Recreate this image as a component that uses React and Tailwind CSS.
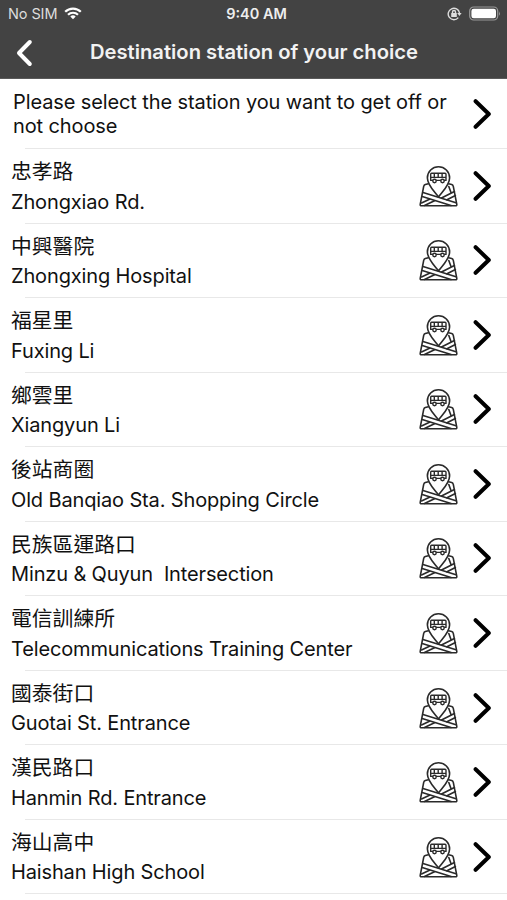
import React from 'react';

const stations = [
  { zh: '忠孝路', en: 'Zhongxiao Rd.' },
  { zh: '中興醫院', en: 'Zhongxing Hospital' },
  { zh: '福星里', en: 'Fuxing Li' },
  { zh: '鄉雲里', en: 'Xiangyun Li' },
  { zh: '後站商圈', en: 'Old Banqiao Sta. Shopping Circle' },
  { zh: '民族區運路口', en: 'Minzu & Quyun  Intersection' },
  { zh: '電信訓練所', en: 'Telecommunications Training Center' },
  { zh: '國泰街口', en: 'Guotai St. Entrance' },
  { zh: '漢民路口', en: 'Hanmin Rd. Entrance' },
  { zh: '海山高中', en: 'Haishan High School' },
];

const Chevron = () => (
  <svg className="w-[19px] h-[32px] shrink-0" viewBox="0 0 19 32" fill="none" stroke="#000" strokeWidth="4" strokeLinecap="round" strokeLinejoin="round">
    <path d="M2.6 3.2 15.8 16 2.6 28.8" />
  </svg>
);

const BusMapIcon = () => (
  <svg className="w-[40px] h-[42px] shrink-0" viewBox="0 0 40 42" fill="none" stroke="#2a2a2a" strokeWidth="1.6" strokeLinecap="round" strokeLinejoin="round">
    {/* folded map */}
    <path d="M9.3 18.8 6.3 19.6q-1.2.4-1.6 1.800L1.200 39.300q-.2 1.500 1.300 1.500h34q1.500 0 1.300-1.500L34.300 21.400q-.4-1.400-1.600-1.800l-3-.8" />
    {/* roads */}
    <path d="M4 27.500 37 37.800M3.200 31.500 32 40.500" />
    <path d="M35.400 26.500 22.500 33M36.400 30.500 28 34.800M15.500 35.800 5.500 40.500M10.500 34.200 2.500 38M29.800 21.500 32 27.500" />
    {/* pin */}
    <path d="M19.500 32C15.500 26.500 8.400 20 8.400 12.900a11.100 11.100 0 0 1 22.200 0c0 7.100-7.100 13.600-11.100 19.100Z" fill="#fff" />
    {/* bus */}
    <path d="M12.500 8.200h13.500q1 0 1 1v6.200H11.700V9.200q0-1 .8-1ZM11.700 12.400H27M15.300 8.200v4.200M19.200 8.200v4.200M23.100 8.200v4.200" strokeWidth="1.400" />
    <circle cx="15.500" cy="16" r="1.700" fill="#fff" strokeWidth="1.400" />
    <circle cx="23.500" cy="16" r="1.700" fill="#fff" strokeWidth="1.400" />
  </svg>
);

const StatusBar = () => (
  <div className="flex items-center h-[27px] px-2 text-[14.5px] leading-[27px]">
    <div className="flex-1 flex items-center gap-[7px] text-[#ddd]">
      <span className="tracking-[-0.1px]">No SIM</span>
      <svg className="w-[18px] h-[13px]" viewBox="0 0 18 13" fill="none" stroke="#fff" strokeWidth="2.200">
        <path d="M1.200 4.800a11 11 0 0 1 15.600 0M4 7.800a7.100 7.100 0 0 1 10 0" />
        <path d="M9 12.300 6.300 9.600a3.900 3.900 0 0 1 5.400 0Z" fill="#fff" stroke="none" />
      </svg>
    </div>
    <span className="font-semibold text-[#eee] ml-[4px]">9:40 AM</span>
    <div className="flex-1 flex items-center justify-end gap-[7px] -mr-[2px]">
      <svg className="w-[15px] h-[14px]" viewBox="0 0 15 14" fill="none" stroke="#ddd" strokeWidth="1.400">
        <path d="M11.300 10.600A5.700 5.700 0 1 1 12.500 6" />
        <path d="M10.200 6h4.400l-2.200 3Z" fill="#ddd" stroke="none" />
        <rect x="4.200" y="6" width="5.600" height="4" rx=".5" fill="#ddd" stroke="none" />
        <path d="M5.500 6.500V5a1.500 1.500 0 0 1 3 0v1.500" />
      </svg>
      <svg className="w-[32px] h-[15px]" viewBox="0 0 32 15" fill="none">
        <rect x=".7" y="1" width="28" height="13" rx="4" stroke="#999" strokeWidth="1.200" />
        <rect x="2.400" y="2.700" width="24.600" height="9.600" rx="2.300" fill="#fff" />
        <path d="M30 5.200q1.800 2.300 0 4.600Z" fill="#999" />
      </svg>
    </div>
  </div>
);

const App = () => {
  return (
    <div className="w-[507px] h-[900px] overflow-hidden bg-white text-[#111] font-['Inter','Noto_Sans_CJK_TC',sans-serif]">
      <header className="h-[79px] bg-[#434343] text-white border-b border-[#5a5a5a]">
        <StatusBar />
        <div className="flex items-center h-[51px] px-[15px]">
          <svg className="w-[18px] h-[28px]" viewBox="0 0 18 28" fill="none" stroke="#fff" strokeWidth="4" strokeLinecap="round" strokeLinejoin="round">
            <path d="M14.800 3 4 14l10.800 11" />
          </svg>
          <h1 className="flex-1 text-center text-[20.200px] font-semibold mr-[17px] text-[#f2f2f2]">Destination station of your choice</h1>
        </div>
      </header>

      <div className="flex items-center h-[69px] pl-[13px] pr-[15px]">
        <p className="flex-1 pt-px text-[20px] leading-[24.500px] tracking-[-0.110px] whitespace-nowrap">
          Please select the station you want to get off or
          <br />
          not choose
        </p>
        <Chevron />
      </div>

      <ul>
        {stations.map((s) => (
          <li key={s.en} className="h-[74.550px]">
            <div className="ml-[25px] h-px bg-[#e8e8e8]" />
            <div className="flex items-center h-[73.500px] pl-[11px] pr-[15px]">
              <div className="flex-1 pt-[2px] whitespace-pre">
                <div className="text-[20.800px] leading-[29.500px]">{s.zh}</div>
                <div className="text-[20px] leading-[30px] tracking-[-0.140px]">{s.en}</div>
              </div>
              <BusMapIcon />
              <div className="ml-[14px] flex">
                <Chevron />
              </div>
            </div>
          </li>
        ))}
      </ul>
      <div className="ml-[25px] h-px bg-[#e8e8e8]" />
    </div>
  );
};

export default App;
